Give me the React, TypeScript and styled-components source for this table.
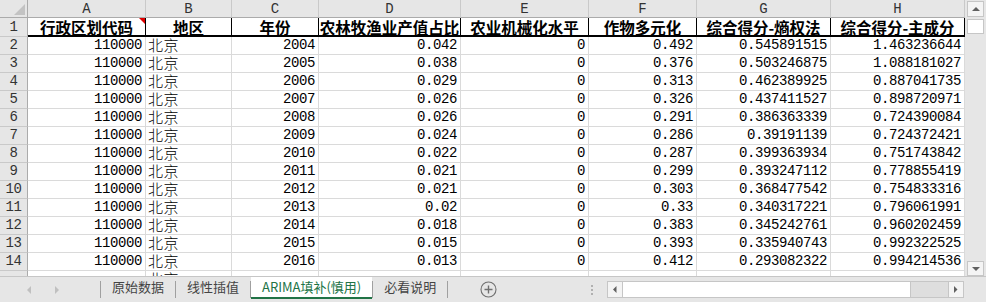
import styled, { createGlobalStyle } from "styled-components";

const colors = {
  grid: "#dadada",
  headBg: "#e6e6e6",
  headLine: "#ababab",
  headSep: "#c9c9c9",
  headText: "#333333",
  text: "#000000",
  green: "#217346",
  barBg: "#e6e6e6",
  tabText: "#444444",
  sep: "#a0a0a0",
  scrollLine: "#c6c6c6",
  arrow: "#606060",
};

const widths = [28, 118, 86, 87, 142, 128, 108, 134, 134];
const letters = ["A", "B", "C", "D", "E", "F", "G", "H"];
const titles = [
  "行政区划代码",
  "地区",
  "年份",
  "农林牧渔业产值占比",
  "农业机械化水平",
  "作物多元化",
  "综合得分-熵权法",
  "综合得分-主成分",
];

// year, 产值占比, 作物多元化, 熵权法, 主成分
const rows: [string, string, string, string, string][] = [
  ["2004", "0.042", "0.492", "0.545891515", "1.463236644"],
  ["2005", "0.038", "0.376", "0.503246875", "1.088181027"],
  ["2006", "0.029", "0.313", "0.462389925", "0.887041735"],
  ["2007", "0.026", "0.326", "0.437411527", "0.898720971"],
  ["2008", "0.026", "0.291", "0.386363339", "0.724390084"],
  ["2009", "0.024", "0.286", "0.39191139", "0.724372421"],
  ["2010", "0.022", "0.287", "0.399363934", "0.751743842"],
  ["2011", "0.021", "0.299", "0.393247112", "0.778855419"],
  ["2012", "0.021", "0.303", "0.368477542", "0.754833316"],
  ["2013", "0.02", "0.33", "0.340317221", "0.796061991"],
  ["2014", "0.018", "0.383", "0.345242761", "0.960202459"],
  ["2015", "0.015", "0.393", "0.335940743", "0.992322525"],
  ["2016", "0.013", "0.412", "0.293082322", "0.994214536"],
];

const GlobalStyle = createGlobalStyle`
  html, body {
    margin: 0;
    padding: 0;
    background: #ffffff;
    overflow: hidden;
  }
  * {
    box-sizing: border-box;
  }
`;

const Window = styled.div`
  width: 986px;
  height: 302px;
  display: flex;
  flex-direction: column;
  background: #ffffff;
  overflow: hidden;
`;

const Main = styled.div`
  display: flex;
  height: 276px;
  flex: none;
`;

const Sheet = styled.div`
  width: 965px;
  height: 276px;
  overflow: hidden;
  display: grid;
  grid-template-columns: ${widths.map((w) => `${w}px`).join(" ")};
  grid-template-rows: 18px 19px;
  grid-auto-rows: 18px;
  align-content: start;
`;

const Corner = styled.div`
  background: ${colors.headBg};
  border-right: 1px solid ${colors.headLine};
  border-bottom: 1px solid ${colors.headLine};
  display: flex;
  align-items: flex-end;
  justify-content: flex-end;
  padding: 0 2px 2px 0;
`;

const ColHead = styled.div`
  background: ${colors.headBg};
  border-right: 1px solid ${colors.headSep};
  border-bottom: 1px solid ${colors.headLine};
  display: flex;
  align-items: center;
  justify-content: center;
  font-family: "Liberation Mono", monospace;
  font-size: 14px;
  color: ${colors.headText};
`;

const RowHead = styled.div`
  background: ${colors.headBg};
  border-right: 1px solid ${colors.headLine};
  border-bottom: 1px solid ${colors.headSep};
  display: flex;
  align-items: flex-end;
  justify-content: center;
  padding-bottom: 1px;
  line-height: 16px;
  font-family: "Liberation Mono", monospace;
  font-size: 14px;
  letter-spacing: -0.4px;
  color: ${colors.headText};
`;

const TitleCell = styled.div`
  position: relative;
  border-right: 1px solid #000000;
  border-bottom: 2px solid #000000;
  display: flex;
  align-items: center;
  justify-content: center;
  overflow: hidden;
  white-space: nowrap;
  font-family: "Noto Sans CJK SC", sans-serif;
  font-weight: 700;
  font-size: 15.5px;
  line-height: 16px;
  color: ${colors.text};
`;

const CommentMark = styled.span`
  position: absolute;
  top: 0;
  right: 0;
  width: 0;
  height: 0;
  border-top: 6px solid #e00000;
  border-left: 6px solid transparent;
`;

const Cell = styled.div<{ $align?: "left" | "right"; $cjk?: boolean }>`
  border-right: 1px solid ${colors.grid};
  border-bottom: 1px solid ${colors.grid};
  display: flex;
  align-items: flex-end;
  justify-content: ${(p) => (p.$align === "left" ? "flex-start" : "flex-end")};
  padding: ${(p) => (p.$cjk ? "0 2px 1px 2px" : "0 3px 1px 2px")};
  overflow: hidden;
  white-space: nowrap;
  font-family: ${(p) =>
    p.$cjk ? `"Noto Sans CJK SC", sans-serif` : `"Liberation Mono", monospace`};
  font-weight: ${(p) => (p.$cjk ? 300 : 400)};
  font-size: ${(p) => (p.$cjk ? "15px" : "14px")};
  letter-spacing: ${(p) => (p.$cjk ? "0.5px" : "-0.4px")};
  line-height: ${(p) => (p.$cjk ? "16px" : "15px")};
  color: ${colors.text};
`;

const VScroll = styled.div`
  width: 21px;
  background: ${colors.barBg};
  display: flex;
  flex-direction: column;
  padding: 1px 2px 0 2px;
`;

const ScrollButton = styled.div<{ $h?: number }>`
  height: ${(p) => p.$h ?? 16}px;
  flex: none;
  background: #f4f4f4;
  border: 1px solid ${colors.scrollLine};
  display: flex;
  align-items: center;
  justify-content: center;
`;

const VThumb = styled.div`
  height: 15px;
  margin-top: 2px;
  background: #ffffff;
  border: 1px solid ${colors.scrollLine};
`;

const Spacer = styled.div`
  flex: 1;
`;

const TabBar = styled.div`
  height: 26px;
  flex: none;
  display: flex;
  align-items: stretch;
  background: ${colors.barBg};
  border-top: 1px solid ${colors.scrollLine};
`;

const NavArea = styled.div`
  width: 100px;
  flex: none;
  display: flex;
  align-items: center;
  padding-left: 27px;
  gap: 24px;
`;

const Separator = styled.div`
  width: 1px;
  height: 17px;
  flex: none;
  align-self: center;
  background: ${colors.sep};
`;

const Tab = styled.div<{ $active?: boolean }>`
  flex: none;
  display: flex;
  align-items: center;
  justify-content: center;
  padding: 0 11px 1px 11px;
  margin-bottom: 3px;
  font-family: "Noto Sans CJK SC", sans-serif;
  font-size: 13px;
  color: ${(p) => (p.$active ? colors.green : colors.tabText)};
  background: ${(p) => (p.$active ? "#ffffff" : "transparent")};
  border-bottom: 2px solid ${(p) => (p.$active ? colors.green : "transparent")};
  white-space: nowrap;
`;

const AddButton = styled.div`
  margin-left: 32px;
  align-self: center;
  display: flex;
`;

const Splitter = styled.div`
  align-self: center;
  display: flex;
  flex-direction: column;
  gap: 2px;
  margin-right: 14px;
`;

const Dot = styled.span`
  width: 2px;
  height: 2px;
  background: #b0b0b0;
`;

const HScroll = styled.div`
  width: 357px;
  height: 17px;
  flex: none;
  align-self: center;
  margin-right: 22px;
  display: flex;
  border: 1px solid ${colors.scrollLine};
  background: #dedede;
`;

const HButton = styled.div`
  width: 14px;
  background: #f4f4f4;
  display: flex;
  align-items: center;
  justify-content: center;
`;

const HThumb = styled.div`
  width: 289px;
  background: #ffffff;
  border-left: 1px solid ${colors.scrollLine};
  border-right: 1px solid ${colors.scrollLine};
`;

const HTrack = styled.div`
  flex: 1;
  border-right: 1px solid ${colors.scrollLine};
`;

const Tri = ({ dir, color, size = 4 }: { dir: "up" | "down" | "left" | "right"; color: string; size?: number }) => {
  const s = size;
  const pts = {
    up: `0,${s} ${s},0 ${s * 2},${s}`,
    down: `0,0 ${s * 2},0 ${s},${s}`,
    left: `${s},0 ${s},${s * 2} 0,${s}`,
    right: `0,0 0,${s * 2} ${s},${s}`,
  }[dir];
  const vertical = dir === "up" || dir === "down";
  return (
    <svg width={vertical ? s * 2 : s} height={vertical ? s : s * 2}>
      <polygon points={pts} fill={color} />
    </svg>
  );
};

function Row({ n, data }: { n: number; data: [string, string, string, string, string] }) {
  const [year, share, crop, ent, pca] = data;
  return (
    <>
      <RowHead>{n}</RowHead>
      <Cell>110000</Cell>
      <Cell $align="left" $cjk>
        北京
      </Cell>
      <Cell>{year}</Cell>
      <Cell>{share}</Cell>
      <Cell>0</Cell>
      <Cell>{crop}</Cell>
      <Cell>{ent}</Cell>
      <Cell>{pca}</Cell>
    </>
  );
}

export default function App() {
  return (
    <Window>
      <GlobalStyle />
      <Main>
        <Sheet>
          <Corner>
            <svg width="11" height="11">
              <polygon points="11,0 11,11 0,11" fill="#c3c3c3" />
            </svg>
          </Corner>
          {letters.map((l) => (
            <ColHead key={l}>{l}</ColHead>
          ))}

          <RowHead>1</RowHead>
          {titles.map((t, i) => (
            <TitleCell key={t}>
              {t}
              {i === 0 && <CommentMark />}
            </TitleCell>
          ))}

          {rows.map((r, i) => (
            <Row key={r[0]} n={i + 2} data={r} />
          ))}

          {/* row 15: only the top of 北京 peeks above the tab bar */}
          <RowHead />
          <Cell />
          <Cell $align="left" $cjk>
            北京
          </Cell>
          {widths.slice(3).map((w, i) => (
            <Cell key={`r15-${i}-${w}`} />
          ))}
        </Sheet>
        <VScroll>
          <ScrollButton>
            <Tri dir="up" color={colors.arrow} />
          </ScrollButton>
          <VThumb />
          <Spacer />
          <ScrollButton $h={15}>
            <Tri dir="down" color={colors.arrow} />
          </ScrollButton>
        </VScroll>
      </Main>
      <TabBar>
        <NavArea>
          <Tri dir="left" color="#c0c0c0" size={4} />
          <Tri dir="right" color="#c0c0c0" size={4} />
        </NavArea>
        <Separator />
        <Tab>原始数据</Tab>
        <Separator />
        <Tab>线性插值</Tab>
        <Separator />
        <Tab $active>ARIMA填补(慎用)</Tab>
        <Separator />
        <Tab>必看说明</Tab>
        <Separator />
        <AddButton>
          <svg width="17" height="17" viewBox="0 0 17 17">
            <circle cx="8.5" cy="8.5" r="7.5" fill="none" stroke="#707070" strokeWidth="1.1" />
            <path d="M8.5 4.5v8M4.5 8.5h8" stroke="#707070" strokeWidth="1.4" />
          </svg>
        </AddButton>
        <Spacer />
        <Splitter>
          <Dot />
          <Dot />
          <Dot />
        </Splitter>
        <HScroll>
          <HButton>
            <Tri dir="left" color={colors.arrow} size={3.5} />
          </HButton>
          <HThumb />
          <HTrack />
          <HButton>
            <Tri dir="right" color={colors.arrow} size={3.5} />
          </HButton>
        </HScroll>
      </TabBar>
    </Window>
  );
}
